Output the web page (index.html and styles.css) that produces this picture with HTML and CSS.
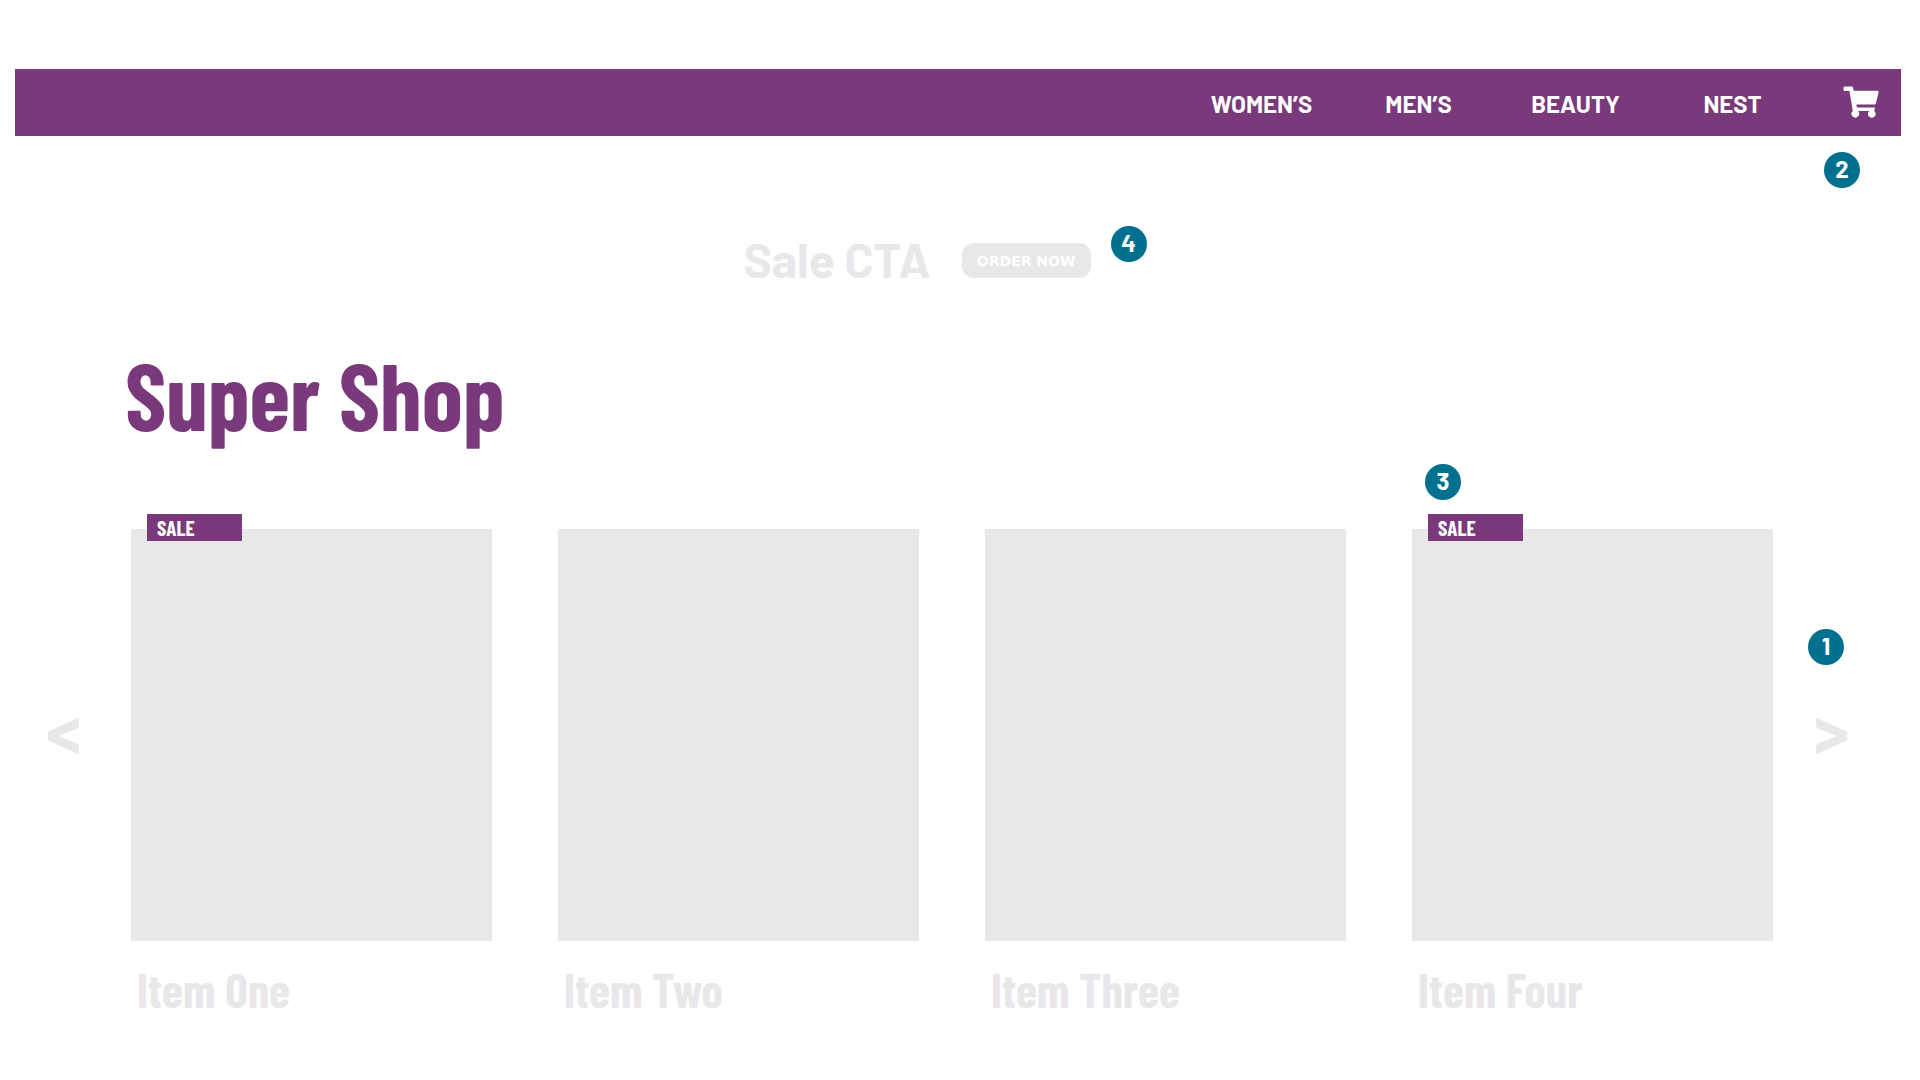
FILE: index.html
```
<!DOCTYPE html>
<html lang="en">
<head>
<meta charset="utf-8">
<meta name="viewport" content="width=device-width, initial-scale=1">
<title>Super Shop</title>
<link rel="stylesheet" href="styles.css">
</head>
<body>
<header class="site-header">
  <nav class="main-nav" aria-label="Main">
    <ul class="nav-list">
      <li><a href="#womens">WOMEN’S</a></li>
      <li><a href="#mens">MEN’S</a></li>
      <li><a href="#beauty">BEAUTY</a></li>
      <li><a href="#nest">NEST</a></li>
    </ul>
  </nav>
  <a class="cart-link" href="#cart" aria-label="Cart">
    <svg class="cart-icon" viewBox="0 0 36 32" aria-hidden="true">
      <path d="M2 0.5h6.600c.8 0 1.300.5 1.500 1.300l.5 2.900h23.600c1 0 1.600.8 1.400 1.700l-2.700 10.900c-.2.8-.8 1.200-1.600 1.200H13.300l.6 3.100h18.200l-.8 3.500a3.800 3.800 0 1 1-5 0H15a3.800 3.800 0 1 1-5.200-.2L6.400 4.900H2C1 4.900.5 4.200.5 3.400V2C.5 1.100 1.100.5 2 .5z"/>
    </svg>
  </a>
  <span class="marker marker-cart">2</span>
</header>
<main>
  <section class="promo">
    <h2 class="promo-title">Sale CTA</h2>
    <div class="promo-action">
      <button class="order-button" type="button">ORDER NOW</button>
      <span class="marker marker-promo">4</span>
    </div>
  </section>
  <h1 class="shop-title">Super Shop</h1>
  <section class="carousel" aria-label="Products">
    <button class="arrow" type="button" aria-label="Previous items">&lt;</button>
    <ul class="products">
      <li class="product">
        <div class="product-image"><span class="sale-tag">SALE</span></div>
        <h3 class="product-name">Item One</h3>
      </li>
      <li class="product">
        <div class="product-image"></div>
        <h3 class="product-name">Item Two</h3>
      </li>
      <li class="product">
        <div class="product-image"></div>
        <h3 class="product-name">Item Three</h3>
      </li>
      <li class="product">
        <div class="product-image"><span class="sale-tag">SALE</span><span class="marker marker-sale">3</span></div>
        <h3 class="product-name">Item Four</h3>
      </li>
    </ul>
    <div class="arrow-wrap">
      <button class="arrow" type="button" aria-label="Next items">&gt;</button>
      <span class="marker marker-next">1</span>
    </div>
  </section>
</main>
</body>
</html>
```
FILE: styles.css
```
:root {
  --purple: #79397b;
  --teal: #00708f;
  --grey: #e9e7ea;
  --condensed: "Barlow Condensed", "Roboto Condensed", "Open Sans Condensed", sans-serif;
}

* { box-sizing: border-box; }

body {
  margin: 0;
  padding: 69px 0 64px;
  background: #fff;
  font-family: Barlow, Roboto, "Liberation Sans", sans-serif;
}

h1, h2, h3, ul { margin: 0; padding: 0; }
ul { list-style: none; }

button {
  margin: 0;
  padding: 0;
  border: 0;
  background: none;
  font: inherit;
  cursor: pointer;
}

.site-header {
  position: relative;
  display: flex;
  align-items: center;
  justify-content: flex-end;
  gap: 32px;
  height: 67px;
  margin: 0 19px 0 15px;
  padding-right: 22px;
  background: var(--purple);
}

.nav-list {
  display: grid;
  grid-template-columns: repeat(4, 157px);
  padding-top: 2px;
  text-align: center;
}

.nav-list a {
  color: #fff;
  font-size: 24px;
  font-weight: 700;
  line-height: 32px;
  text-decoration: none;
}

.cart-link {
  display: block;
  padding-bottom: 2px;
}

.cart-icon {
  display: block;
  width: 36px;
  height: 32px;
  fill: #fff;
}

.marker {
  position: absolute;
  width: 36px;
  height: 36px;
  border-radius: 50%;
  background: var(--teal);
  color: #fff;
  font-family: Barlow, Roboto, "Liberation Sans", sans-serif;
  font-size: 24px;
  font-weight: 700;
  line-height: 34px;
  text-align: center;
}

.marker-cart { top: 83px; right: 41px; }
.marker-promo { left: 149px; top: -17px; }
.marker-sale { left: 13px; top: -65px; }
.marker-next { left: 35px; top: 100px; }

.promo {
  display: flex;
  align-items: flex-start;
  justify-content: center;
  gap: 31px;
  padding: 107px 86px 0 0;
}

.promo-title {
  color: var(--grey);
  font-size: 48px;
  font-weight: 700;
  line-height: 32px;
}

.promo-action { position: relative; }

.order-button {
  display: block;
  width: 129px;
  height: 35px;
  border-radius: 12px;
  background: var(--grey);
  color: #fff;
  font-family: "DejaVu Sans", sans-serif;
  font-size: 14px;
  font-weight: 700;
}

.shop-title {
  padding: 68px 125px 0;
  color: var(--purple);
  font-family: var(--condensed);
  font-size: 93px;
  font-weight: 700;
  line-height: 96px;
}

.carousel {
  display: grid;
  grid-template-columns: 131px 1fr 147px;
  align-items: start;
  padding-top: 87px;
}

.products {
  display: grid;
  grid-template-columns: repeat(4, 1fr);
  gap: 66px;
}

.product-image {
  position: relative;
  aspect-ratio: 361 / 412;
  background: var(--grey);
}

.sale-tag {
  position: absolute;
  top: -15px;
  left: 16px;
  width: 95px;
  padding-left: 10px;
  background: var(--purple);
  color: #fff;
  font-family: var(--condensed);
  font-size: 21px;
  font-weight: 700;
  line-height: 27px;
}

.product-name {
  padding: 24px 6px 0;
  color: var(--grey);
  font-family: var(--condensed);
  font-size: 48px;
  font-weight: 700;
  line-height: 48px;
}

.arrow-wrap {
  position: relative;
  padding-right: 26px;
}

.arrow {
  width: 100%;
  margin-top: 166px;
  padding-right: 4px;
  color: var(--grey);
  font-size: 72px;
  font-weight: 700;
  line-height: 64px;
}
```
